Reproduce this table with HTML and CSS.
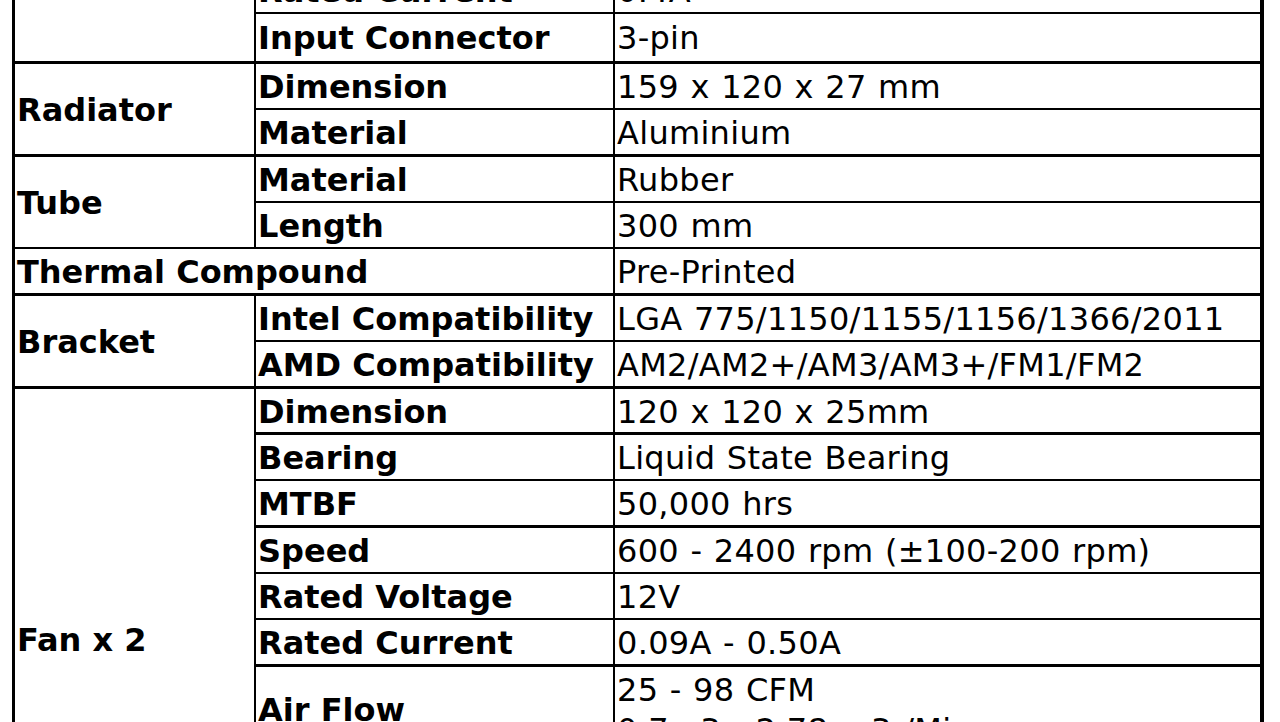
FILE: index.html
```html
<!DOCTYPE html>
<html lang="en">
<head>
<meta charset="utf-8">
<title>Specifications</title>
<link rel="stylesheet" href="styles.css">
</head>
<body>
<div class="spec">
  <div class="grp rows4">Pump</div>
  <div class="lbl">Dimension</div><div class="val">70 x 70 x 27 mm</div>
  <div class="lbl">Rated Voltage</div><div class="val">12V</div>
  <div class="lbl">Rated Current</div><div class="val">0.4A</div>
  <div class="lbl tall">Input Connector</div><div class="val tall">3-pin</div>

  <div class="grp rows2">Radiator</div>
  <div class="lbl">Dimension</div><div class="val">159 x 120 x 27 mm</div>
  <div class="lbl">Material</div><div class="val">Aluminium</div>

  <div class="grp rows2">Tube</div>
  <div class="lbl">Material</div><div class="val">Rubber</div>
  <div class="lbl">Length</div><div class="val">300 mm</div>

  <div class="grp wide">Thermal Compound</div><div class="val">Pre-Printed</div>

  <div class="grp rows2">Bracket</div>
  <div class="lbl">Intel Compatibility</div><div class="val">LGA 775/1150/1155/1156/1366/2011</div>
  <div class="lbl">AMD Compatibility</div><div class="val">AM2/AM2+/AM3/AM3+/FM1/FM2</div>

  <div class="grp rows10">Fan x 2</div>
  <div class="lbl">Dimension</div><div class="val">120 x 120 x 25mm</div>
  <div class="lbl">Bearing</div><div class="val">Liquid State Bearing</div>
  <div class="lbl">MTBF</div><div class="val">50,000 hrs</div>
  <div class="lbl">Speed</div><div class="val">600 - 2400 rpm (±100-200 rpm)</div>
  <div class="lbl">Rated Voltage</div><div class="val">12V</div>
  <div class="lbl">Rated Current</div><div class="val">0.09A - 0.50A</div>
  <div class="lbl">Air Flow</div><div class="val"><div>25 - 98 CFM<br>0.7m3 - 2.78 m3 /Min</div></div>
  <div class="lbl">Air Pressure</div><div class="val">0.3 - 4.1 mmH2O</div>
  <div class="lbl">Noise Level</div><div class="val">16 - 40 dBA</div>
  <div class="lbl">Connector</div><div class="val">4-pin PWM</div>
</div>
</body>
</html>
```

FILE: styles.css
```css
html, body {
  margin: 0;
  padding: 0;
  background: #ffffff;
}

body {
  font-family: "DejaVu Sans", Verdana, sans-serif;
  font-size: 32px;
  color: #000000;
  overflow: hidden;
}

.spec {
  display: grid;
  width: fit-content;
  grid-template-columns: 239px 357px 645px;
  row-gap: 2.5px;
  column-gap: 2px;
  padding: 3px 4px 3px 3px;
  margin: -127.7px 0 0 12px;
  background: #000000;
}

.spec > div {
  background: #ffffff;
  display: flex;
  align-items: center;
  padding: 2.95px 2px 0.95px;
  line-height: 40px;
  white-space: nowrap;
  box-sizing: border-box;
}

.grp,
.lbl {
  font-weight: bold;
}

.grp {
  padding-left: 3px;
}

.val {
  letter-spacing: 0.3px;
  word-spacing: 1px;
}

.rows2 { grid-row: span 2; }
.rows4 { grid-row: span 4; }
.rows10 { grid-row: span 10; }
.wide { grid-column: span 2; }

.spec > .tall {
  padding-top: 4px;
  padding-bottom: 3px;
}
```
